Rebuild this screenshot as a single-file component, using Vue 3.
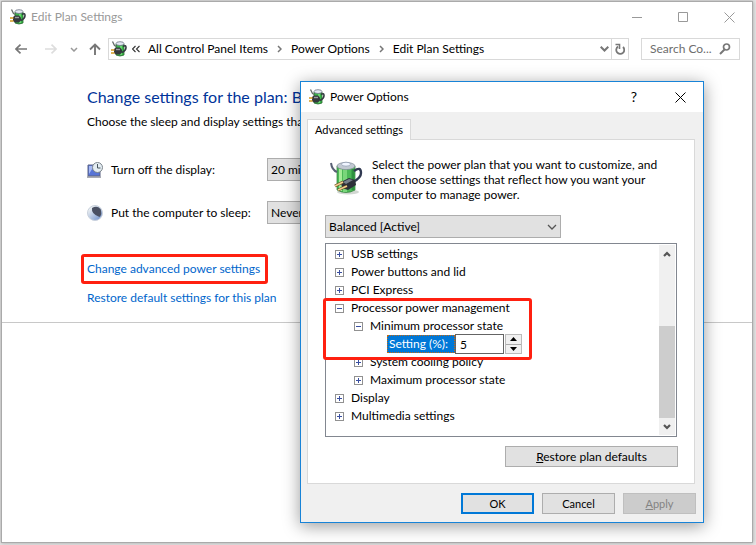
<script setup>
import { ref } from 'vue';

const crumbs = ['All Control Panel Items', 'Power Options', 'Edit Plan Settings'];

const displayTimeout = ref('20 minutes');
const sleepTimeout = ref('Never');
const timeouts = ['5 minutes', '10 minutes', '20 minutes', '1 hour', 'Never'];

const plan = ref('Balanced [Active]');
const minState = ref('5');

const nodes = ref([
	{ label: 'USB settings', level: 0, open: false },
	{ label: 'Power buttons and lid', level: 0, open: false },
	{ label: 'PCI Express', level: 0, open: false },
	{ label: 'Processor power management', level: 0, open: true },
	{ label: 'Minimum processor state', level: 1, open: true },
	{ label: 'Setting (%):', level: 2, field: true },
	{ label: 'System cooling policy', level: 1, open: false },
	{ label: 'Maximum processor state', level: 1, open: false },
	{ label: 'Display', level: 0, open: false },
	{ label: 'Multimedia settings', level: 0, open: false },
]);

function step(amount) {
	const next = Number(minState.value) + amount;
	minState.value = String(Math.min(100, Math.max(0, next)));
}
</script>

<template>
	<main class="desktop">
		<svg class="symbols" width="0" height="0" aria-hidden="true">
			<symbol id="plug-small" viewBox="0 0 16 16">
				<path d="M5 3h8v11q-4 2-8 0z" fill="#39b548" stroke="#27672e" stroke-width="0.8" />
				<path d="M10 5v9" stroke="#7be27c" stroke-width="1.5" />
				<ellipse cx="9" cy="2.6" rx="4" ry="1.9" fill="#e4e8f3" stroke="#6f7685" stroke-width="0.8" />
				<path d="M1.5 0.5l2 4 2 1" fill="none" stroke="#626a68" stroke-width="1.3" />
				<path d="M12 5.5q3-2 3 1 0 3-4 5" fill="none" stroke="#333a40" stroke-width="1.6" />
				<path d="M3 8l2-1.500h4l2 2v3l-2 2H5L3 12z" fill="#35383d" />
				<path d="M5 8.5h4" stroke="#9a9ca2" stroke-width="1.4" />
				<path d="M0 9h3.500M0 12h3.500" stroke="#d39b1f" stroke-width="1.5" />
			</symbol>
			<symbol id="plug-large" viewBox="0 0 34 36">
				<ellipse cx="18" cy="32" rx="11" ry="2.5" fill="#d2d7d2" />
				<path d="M7 6v24q9 5 18 0V6z" fill="#4cb957" stroke="#2c7c35" stroke-width="0.7" />
				<path d="M10.500 9v22" stroke="#a5ec98" stroke-width="3" />
				<path d="M15 9v23" stroke="#79d67a" stroke-width="4" />
				<path d="M23 9v21" stroke="#2f9140" stroke-width="3" />
				<ellipse cx="16" cy="6" rx="9" ry="3.6" fill="#c2c9d2" stroke="#7f8995" stroke-width="0.7" />
				<ellipse cx="16" cy="4.2" rx="4.5" ry="2" fill="#f0f5ff" stroke="#8793a7" stroke-width="0.7" />
				<path d="M1 3q1 7 6 9" fill="none" stroke="#596175" stroke-width="2" />
				<path d="M24 11q7-5 7 2 0 5-8 9" fill="none" stroke="#303951" stroke-width="2.4" />
				<path d="M11 22l8-4 6 2 1 5-8 5-6-2z" fill="#2d3039" />
				<path d="M13 22l6-3 4 1-7 4z" fill="#77808a" />
				<path d="M5 26l8-4M8 30l9-4" stroke="#69491d" stroke-width="3" />
				<path d="M5 26l8-4M8 30l9-4" stroke="#f0cf91" stroke-width="1.6" />
			</symbol>
		</svg>

		<section class="window">
			<header class="titlebar">
				<svg class="icon"><use href="#plug-small" /></svg>
				<span class="caption">Edit Plan Settings</span>
				<button class="caption-button" aria-label="Minimize">
					<svg width="11" height="11"><path d="M0 5.5h10" /></svg>
				</button>
				<button class="caption-button" aria-label="Maximize">
					<svg width="11" height="11"><path d="M0.5 0.5h9v9h-9z" /></svg>
				</button>
				<button class="caption-button" aria-label="Close">
					<svg width="11" height="11"><path d="M0.5 0.5l10 10M10.5 0.5l-10 10" /></svg>
				</button>
			</header>

			<nav class="navbar">
				<button class="nav-button" aria-label="Back">
					<svg width="12" height="10"><path d="M12 5H1M5.5 0.7L1 5l4.5 4.3" stroke="#777" stroke-width="1.7" /></svg>
				</button>
				<button class="nav-button forward" aria-label="Forward" disabled>
					<svg width="12" height="10"><path d="M0 5h11M6.5 0.7L11 5l-4.5 4.3" stroke="#ddd" stroke-width="1.7" /></svg>
				</button>
				<button class="nav-button recent" aria-label="Recent locations">
					<svg width="8" height="5"><path d="M1 1l3 3 3-3" stroke="#999" stroke-width="1.5" /></svg>
				</button>
				<button class="nav-button up" aria-label="Up">
					<svg width="12" height="12"><path d="M6 12V1.5M1 6.5l5-5 5 5" stroke="#777" stroke-width="1.9" /></svg>
				</button>
				<div class="address">
					<svg class="icon"><use href="#plug-small" /></svg>
					<svg class="more" width="8" height="8"><path d="M3.5 1l-3 3 3 3M7.5 1l-3 3 3 3" stroke="#333" stroke-width="1.1" /></svg>
					<template v-for="(crumb, i) in crumbs" :key="crumb">
						<svg v-if="i > 0" class="chevron" width="5" height="8"><path d="M1 1l3 3-3 3" stroke="#777" stroke-width="1.5" /></svg>
						<a class="crumb" href="#">{{ crumb }}</a>
					</template>
					<button class="address-button history" aria-label="Previous locations">
						<svg width="9" height="6"><path d="M0.7 0.7l3.8 3.8 3.8-3.8" stroke="#777" stroke-width="2" /></svg>
					</button>
					<button class="address-button refresh" aria-label="Refresh">
						<svg width="10" height="12"><path d="M8 4A4 4 0 1 1 3 3.6" stroke="#777" stroke-width="1.8" /><path d="M0.5 1.5H4.5V6" stroke="#777" stroke-width="1.6" /></svg>
					</button>
				</div>
				<label class="search">
					<input type="text" placeholder="Search Co..." aria-label="Search Control Panel" />
					<svg width="12" height="12"><circle cx="7.5" cy="4" r="3" stroke="#777" stroke-width="1.7" /><path d="M5.5 6.5L1 11" stroke="#777" stroke-width="2" /></svg>
				</label>
			</nav>

			<div class="content">
				<h1>Change settings for the plan: Balanced</h1>
				<p class="intro">Choose the sleep and display settings that you want your computer to use.</p>
				<div class="setting">
					<svg class="icon" viewBox="0 0 16 16">
						<path d="M1 3h12v11H1z" fill="#5774d6" stroke="#5b6284" />
						<path d="M2 4h5L2 12z" fill="#a7baf6" />
						<path d="M0 15h14" stroke="#8c8f9b" stroke-width="1.5" />
						<circle cx="10.5" cy="5.5" r="5" fill="#e4edf2" stroke="#7c858c" />
						<path d="M10.5 2v4h3" fill="none" stroke="#49565f" />
					</svg>
					<label for="display">Turn off the display:</label>
					<select id="display" v-model="displayTimeout">
						<option v-for="t in timeouts" :key="t">{{ t }}</option>
					</select>
				</div>
				<div class="setting">
					<svg class="icon" viewBox="0 0 16 16">
						<defs>
							<linearGradient id="moon" x2="1" y2="1">
								<stop offset="0.2" stop-color="#e9eef2" />
								<stop offset="1" stop-color="#6689c9" />
							</linearGradient>
						</defs>
						<circle cx="8" cy="8" r="7.5" fill="url(#moon)" stroke="#c9d1dc" />
						<path d="M5 3q5-3 8.5 1 2 5-1 8Q4 9 5 3z" fill="#4a5062" />
					</svg>
					<label for="sleep">Put the computer to sleep:</label>
					<select id="sleep" v-model="sleepTimeout">
						<option v-for="t in timeouts" :key="t">{{ t }}</option>
					</select>
				</div>
				<div class="links">
					<a class="marked" href="#">Change advanced power settings</a>
					<a href="#">Restore default settings for this plan</a>
				</div>
			</div>
			<div class="divider"></div>
		</section>

		<section class="dialog" role="dialog" aria-labelledby="dialog-title">
			<header class="dialog-title">
				<svg class="icon"><use href="#plug-small" /></svg>
				<span id="dialog-title" class="caption">Power Options</span>
				<button class="caption-button help" aria-label="Help">?</button>
				<button class="caption-button" aria-label="Close">
					<svg width="11" height="11"><path d="M0.5 0.5l10 10M10.5 0.5l-10 10" /></svg>
				</button>
			</header>
			<div class="dialog-body">
				<button class="tab" role="tab" aria-selected="true">Advanced settings</button>
				<div class="panel">
					<div class="about">
						<svg width="34" height="36"><use href="#plug-large" /></svg>
						<p>Select the power plan that you want to customize, and then choose settings that reflect how you want your computer to manage power.</p>
					</div>
					<div class="plan">
						<select v-model="plan" aria-label="Power plan">
							<option>Balanced [Active]</option>
						</select>
						<svg width="10" height="6"><path d="M1 1l4 4 4-4" stroke="#555" stroke-width="1.3" /></svg>
					</div>
					<div class="tree">
						<ul>
							<li v-for="node in nodes" :key="node.label" :class="'level-' + node.level">
								<template v-if="node.field">
									<label for="min-state">{{ node.label }}</label>
									<input id="min-state" v-model="minState" type="text" />
									<span class="spinner">
										<button aria-label="Increase" @click="step(1)"><svg width="7" height="4"><path d="M0 4l3.5-4L7 4z" /></svg></button>
										<button aria-label="Decrease" @click="step(-1)"><svg width="7" height="4"><path d="M0 0l3.5 4L7 0z" /></svg></button>
									</span>
								</template>
								<template v-else>
									<button class="toggle" :aria-label="'Toggle ' + node.label" @click="node.open = !node.open">
										<svg width="7" height="7">
											<path d="M1 3.5h5" />
											<path v-if="!node.open" d="M3.5 1v5" />
										</svg>
									</button>
									<span>{{ node.label }}</span>
								</template>
							</li>
						</ul>
						<div class="scrollbar">
							<button aria-label="Scroll up"><svg width="8" height="6"><path d="M1 5l3-3 3 3" stroke="#555" stroke-width="2.2" /></svg></button>
							<div class="track"><div class="thumb"></div></div>
							<button aria-label="Scroll down"><svg width="8" height="6"><path d="M1 1l3 3 3-3" stroke="#555" stroke-width="2.2" /></svg></button>
						</div>
						<div class="marker"></div>
					</div>
					<button class="push restore"><u>R</u>estore plan defaults</button>
				</div>
				<footer class="actions">
					<button class="push primary">OK</button>
					<button class="push">Cancel</button>
					<button class="push" disabled><u>A</u>pply</button>
				</footer>
			</div>
		</section>
	</main>
</template>

<style>
body {
	background: #e6e6e6;
}
</style>

<style scoped>
* {
	box-sizing: border-box;
}

.desktop {
	position: relative;
	display: flex;
	min-height: 100vh;
	padding: 1px 3px 2px 1px;
	font-family: Lato, 'Open Sans', sans-serif;
	font-size: 12px;
	line-height: 16px;
	color: #000;
	overflow: hidden;
}

.symbols {
	position: absolute;
}

button,
input,
select {
	font: inherit;
	color: inherit;
	margin: 0;
	padding: 0;
	border: none;
	border-radius: 0;
	background: none;
	appearance: none;
}

svg {
	display: block;
	flex: none;
	fill: none;
}

.icon {
	width: 16px;
	height: 16px;
}

.window {
	flex: 1;
	min-width: 0;
	background: #fff;
	border: 1px solid #aaa;
	box-shadow: 0 0 4px rgba(0, 0, 0, 0.3);
}

.titlebar {
	display: flex;
	align-items: center;
	height: 30px;
	padding-left: 8px;
	color: #999;
}

.caption {
	flex: 1;
	margin-left: 5px;
}

.caption-button {
	display: flex;
	align-items: center;
	justify-content: center;
	width: 46px;
	height: 30px;
}

.caption-button svg {
	stroke: currentColor;
}

.navbar {
	display: flex;
	align-items: center;
	height: 34px;
	padding: 0 12px 0 13px;
}

.forward {
	margin-left: 18px;
}

.recent {
	margin-left: 13px;
}

.up {
	margin-left: 11px;
	margin-right: 7px;
}

.address {
	flex: 1;
	display: flex;
	align-items: center;
	height: 22px;
	padding-left: 2px;
	border: 1px solid #d9d9d9;
	white-space: nowrap;
}

.more {
	margin: 0 8px 0 5px;
}

.chevron {
	margin: 0 9px;
}

.crumb {
	color: #000;
	text-decoration: none;
}

.address-button {
	display: flex;
	align-items: center;
	justify-content: center;
	width: 17px;
	height: 20px;
}

.history {
	width: 14px;
	margin-left: auto;
}

.refresh {
	border-left: 1px solid #d9d9d9;
}

.search {
	display: flex;
	align-items: center;
	width: 99px;
	height: 22px;
	margin-left: 12px;
	padding: 0 8px;
	border: 1px solid #d9d9d9;
}

.search input {
	flex: 1;
	min-width: 0;
}

.search input::placeholder {
	color: #6d6d6d;
	opacity: 1;
}

.content {
	padding: 21px 85px 16px;
	white-space: nowrap;
}

h1 {
	margin: 0;
	font-size: 16px;
	font-weight: normal;
	line-height: 20px;
	color: #039;
}

.intro {
	margin: 7px 0 28px;
}

.setting {
	display: flex;
	align-items: center;
	height: 23px;
	margin-bottom: 20px;
}

.setting label {
	width: 156px;
	margin-left: 8px;
}

.setting select {
	width: 180px;
	height: 23px;
	padding-left: 3px;
	background: #e1e1e1;
	border: 1px solid #adadad;
}

.links {
	display: flex;
	flex-direction: column;
	align-items: flex-start;
	gap: 6px;
	padding-top: 10px;
}

.links a {
	color: #06c;
	text-decoration: none;
}

.links .marked {
	margin-left: -6px;
	padding: 4px 5px 4px 3px;
	border: 3px solid #ff2010;
	border-radius: 3px;
}

.divider {
	border-top: 1px solid #c8c8c8;
}

.dialog {
	position: absolute;
	top: 81px;
	left: 300px;
	right: 52px;
	background: #f0f0f0;
	border: 1px solid #1883d7;
	box-shadow: 0 3px 16px rgba(0, 0, 0, 0.4);
}

.dialog-title {
	display: flex;
	align-items: center;
	height: 30px;
	padding-left: 8px;
	background: #fff;
}

.help {
	font-size: 14px;
}

.dialog-body {
	padding: 7px 7px 8px 6px;
}

.tab {
	display: block;
	position: relative;
	height: 21px;
	padding: 0 7px;
	font-size: 11px;
	background: #fff;
	border: 1px solid #d9d9d9;
	border-bottom: none;
	z-index: 1;
}

.panel {
	margin: -1px 1px 0 0;
	padding: 17px 17px 16px;
	background: #fff;
	border: 1px solid #d9d9d9;
}

.about {
	display: flex;
	gap: 8px;
	padding-left: 5px;
	line-height: 15px;
}

.about svg {
	margin-top: 3px;
}

.about p {
	flex: 1;
	margin: 0;
}

.plan {
	position: relative;
	width: 236px;
	margin-top: 13px;
}

.plan select {
	width: 100%;
	height: 23px;
	padding-left: 3px;
	background: #e1e1e1;
	border: 1px solid #adadad;
}

.plan svg {
	position: absolute;
	top: 9px;
	right: 4px;
	pointer-events: none;
}

.tree {
	position: relative;
	display: flex;
	height: 194px;
	margin-top: 5px;
	padding: 1px;
	border: 1px solid #828790;
}

ul {
	flex: 1;
	margin: 0;
	padding: 0 0 0 8px;
	list-style: none;
}

li {
	display: flex;
	align-items: center;
	height: 18px;
	white-space: nowrap;
}

.level-1 {
	padding-left: 19px;
}

.level-2 {
	padding-left: 52px;
}

.toggle {
	width: 9px;
	height: 9px;
	margin-right: 7px;
	border: 1px solid #919191;
}

.toggle svg {
	stroke: #3a4fa0;
}

li label {
	width: 68px;
	height: 18px;
	padding-left: 1px;
	line-height: 16px;
	color: #fff;
	background: #0078d7;
	border: 1px dotted #c86a10;
}

li input {
	width: 49px;
	height: 20px;
	padding-left: 4px;
	background: #fff;
	border: 1px solid #646464;
}

.spinner {
	display: flex;
	flex-direction: column;
	width: 17px;
	height: 20px;
	margin-left: 1px;
	background: #f0f0f0;
	border: 1px solid #bbb;
}

.spinner button {
	flex: 1;
	display: flex;
	align-items: center;
	justify-content: center;
}

.spinner button + button {
	border-top: 1px solid #aaa;
}

.spinner path {
	fill: #000;
}

.scrollbar {
	display: flex;
	flex-direction: column;
	width: 16px;
	background: #f0f0f0;
}

.scrollbar button {
	display: flex;
	align-items: center;
	justify-content: center;
	height: 17px;
}

.track {
	flex: 1;
	display: flex;
	flex-direction: column;
	justify-content: flex-end;
}

.thumb {
	height: 59%;
	background: #cdcdcd;
}

/* frame around the processor settings */
.marker {
	position: absolute;
	top: 54px;
	left: -3px;
	width: 209px;
	height: 62px;
	border: 3px solid #ff2010;
	border-radius: 3px;
	pointer-events: none;
}

.push {
	width: 73px;
	height: 21px;
	font-size: 11px;
	text-align: center;
	line-height: 19px;
	background: #e1e1e1;
	border: 1px solid #adadad;
}

.push:disabled {
	color: #838383;
	background: #ccc;
	border-color: #bfbfbf;
}

.restore {
	display: block;
	width: 173px;
	margin: 9px -1px 0 auto;
	font-size: 12px;
}

.primary {
	border: 2px solid #0078d7;
	line-height: 17px;
}

.actions {
	display: flex;
	justify-content: flex-end;
	gap: 8px;
	margin-top: 9px;
}
</style>
